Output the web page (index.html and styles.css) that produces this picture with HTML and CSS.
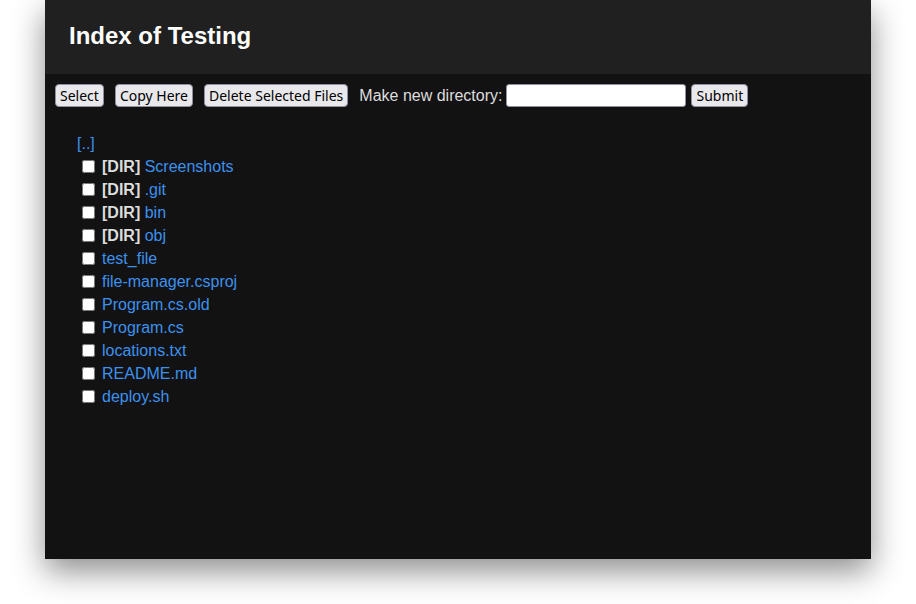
FILE: index.html
```html
<!DOCTYPE html>
<html>
<head>
<meta charset="utf-8">
<title>Index of Testing</title>
<link rel="stylesheet" href="styles.css">
</head>
<body>
<div class="window">
  <header class="header"><h1 class="title">Index of Testing</h1></header>
  <form class="toolbar">
    <button type="button" class="btn">Select</button>
    <button type="button" class="btn">Copy Here</button>
    <button type="button" class="btn">Delete Selected Files</button>
    <label class="label">Make new directory:</label>
    <input type="text" class="dir-input">
    <button type="button" class="btn btn-submit">Submit</button>
  </form>
  <ul class="listing">
    <li class="row up"><a href="#">[..]</a></li>
    <li class="row"><input type="checkbox" class="cb"><span class="sp"><b class="dir">[DIR]</b> <a href="#">Screenshots</a></span></li>
    <li class="row"><input type="checkbox" class="cb"><span class="sp"><b class="dir">[DIR]</b> <a href="#">.git</a></span></li>
    <li class="row"><input type="checkbox" class="cb"><span class="sp"><b class="dir">[DIR]</b> <a href="#">bin</a></span></li>
    <li class="row"><input type="checkbox" class="cb"><span class="sp"><b class="dir">[DIR]</b> <a href="#">obj</a></span></li>
    <li class="row"><input type="checkbox" class="cb"><span class="sp"><a href="#">test_file</a></span></li>
    <li class="row"><input type="checkbox" class="cb"><span class="sp"><a href="#">file-manager.csproj</a></span></li>
    <li class="row"><input type="checkbox" class="cb"><span class="sp"><a href="#">Program.cs.old</a></span></li>
    <li class="row"><input type="checkbox" class="cb"><span class="sp"><a href="#">Program.cs</a></span></li>
    <li class="row"><input type="checkbox" class="cb"><span class="sp"><a href="#">locations.txt</a></span></li>
    <li class="row"><input type="checkbox" class="cb"><span class="sp"><a href="#">README.md</a></span></li>
    <li class="row"><input type="checkbox" class="cb"><span class="sp"><a href="#">deploy.sh</a></span></li>
  </ul>
</div>
</body>
</html>
```
FILE: styles.css
```css
html, body {
  margin: 0;
  padding: 0;
  background: #ffffff;
}
body {
  font-family: "Liberation Sans", Arial, sans-serif;
  font-size: 16px;
  padding-bottom: 45px;
}
.window {
  width: 826px;
  height: 559px;
  margin: 0 auto;
  background: #121212;
  box-shadow: 0 12px 30px rgba(0, 0, 0, 0.45);
}
.header {
  height: 74px;
  box-sizing: border-box;
  background: #202020;
  display: flex;
  align-items: center;
  padding: 0 24px 2px 24px;
}
.title {
  margin: 0;
  font-size: 24px;
  font-weight: bold;
  color: #ffffff;
}
.toolbar {
  display: flex;
  align-items: center;
  padding: 10px 10px 0 10px;
  height: 23px;
  margin: 0;
}
.btn {
  height: 23px;
  box-sizing: border-box;
  background: #e9e9ed;
  border: 1px solid #8f8f9d;
  border-radius: 4px;
  padding: 0 4px;
  font-family: "Noto Sans", "Open Sans", sans-serif;
  font-size: 14px;
  color: #000;
  margin: 0 11px 0 0;
}
.label {
  color: #dddddd;
  font-size: 16px;
  margin-right: 4px;
}
.dir-input {
  width: 180px;
  height: 23px;
  box-sizing: border-box;
  border: 1px solid #8f8f9d;
  border-radius: 3px;
  background: #fff;
  margin: 0 5px 0 0;
  padding: 0 4px;
}
.btn-submit {
  margin-right: 0;
}
.listing {
  list-style: none;
  margin: 0;
  padding: 25px 0 0 31px;
}
.row {
  height: 23px;
  line-height: 23px;
  display: flex;
  align-items: center;
  color: #dddddd;
}
.up {
  padding-left: 1px;
}
.cb {
  width: 13px;
  height: 13px;
  margin: 0 7px 0 6px;
}
.dir {
  color: #dddddd;
}
a {
  color: #3c91ee;
  text-decoration: none;
}
```
